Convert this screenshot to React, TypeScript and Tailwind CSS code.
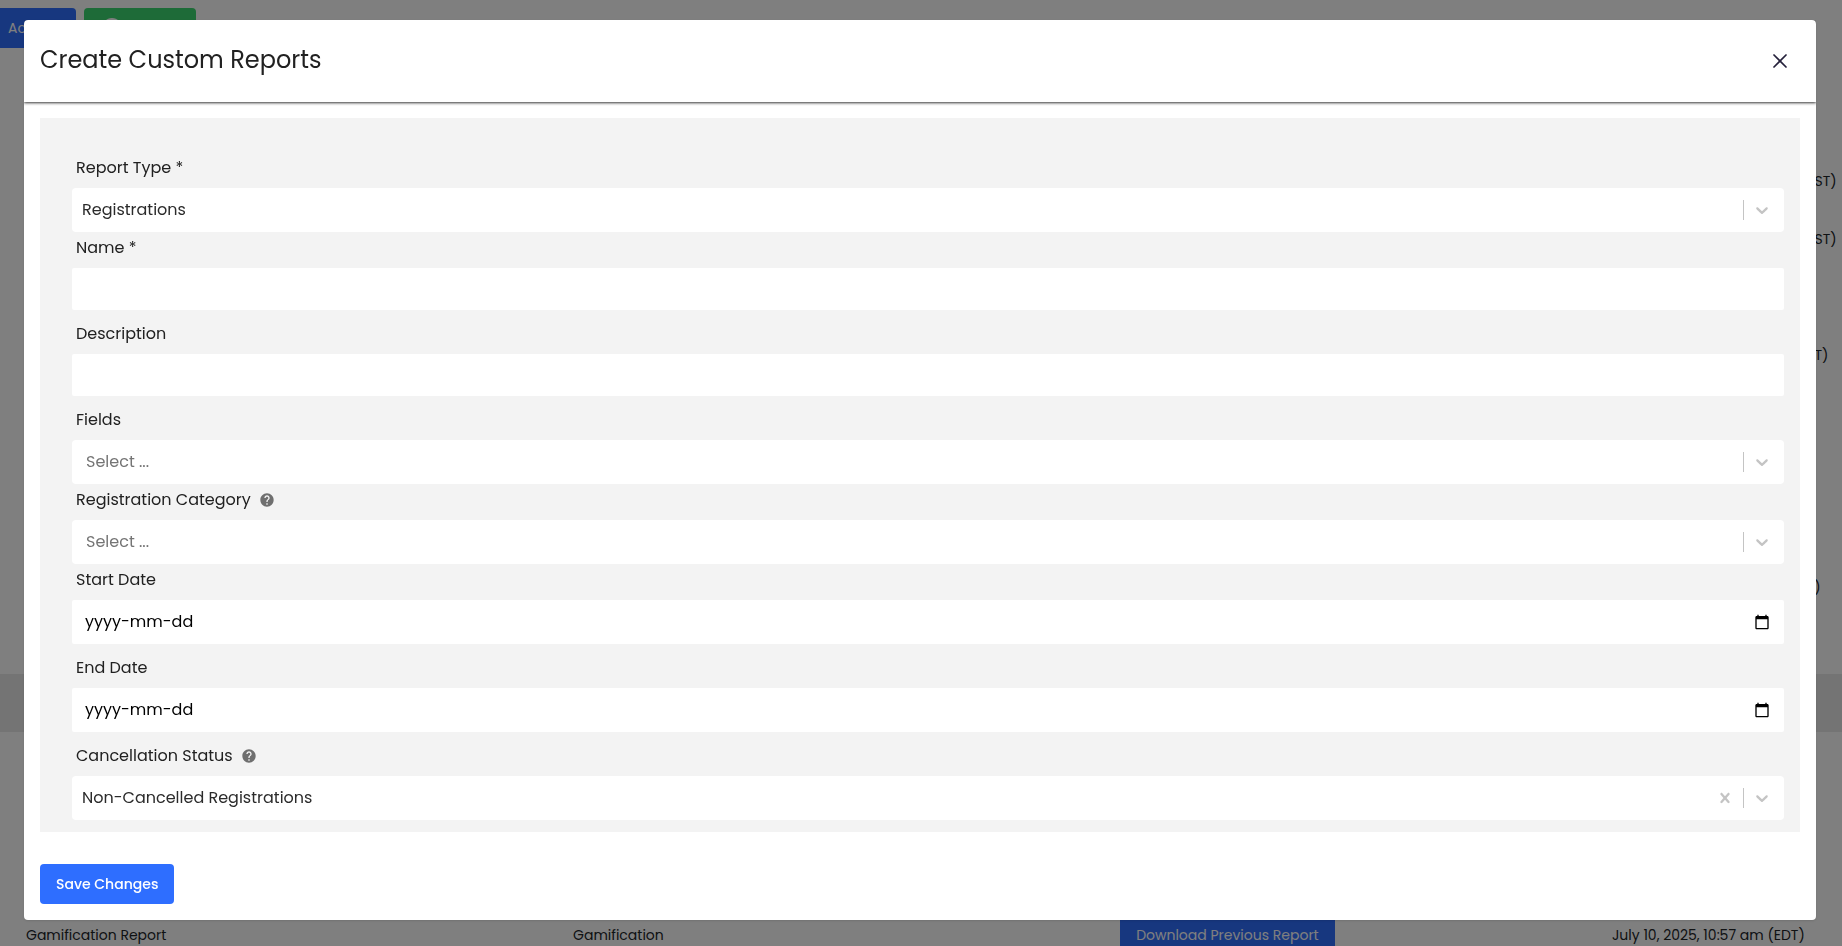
import { useState } from 'react';
import type { ReactNode } from 'react';
import { X } from 'lucide-react';
import { MdHelp, MdCheckCircle } from 'react-icons/md';

type ReportRow = {
  name?: string;
  type?: string;
  date?: string;
  selected?: boolean;
};

const rows: ReportRow[] = [
  { date: "February 20, 2025, 10:17 am (EST)" },
  { date: "February 20, 2025, 10:17 am (EST)" },
  {},
  { date: "October 7, 2025, 10:57 am (EDT)" },
  {},
  {},
  {},
  { date: "August 7, 2025, 10:57 am (EDT)" },
  {},
  { selected: true },
  {},
  {},
  {},
  { name: "Gamification Report", type: "Gamification", date: "July 10, 2025, 10:57 am (EDT)" }
];

function ReportsPage() {
  return (
    <div className="h-full overflow-hidden bg-white text-sm text-[#212529]">
      <div className="flex gap-2 pt-2 h-[152px] items-start">
        <button className="h-10 w-[76px] pl-2 pr-4 text-left rounded-r bg-[#2e6eff] text-white">Actions</button>
        <button className="h-10 w-28 pl-4 flex items-center rounded bg-[#3dd670] text-white" aria-label="Export">
          <MdCheckCircle size={24} />
        </button>
      </div>
      <table className="w-full table-fixed whitespace-nowrap">
        <colgroup>
          <col className="w-[29.7%]" />
          <col className="w-[29.7%]" />
          <col className="w-[26.7%]" />
          <col />
        </colgroup>
        <tbody>
          {rows.map((row, idx) => (
            <tr key={idx} className={row.selected ? "h-[58px] bg-[#e8e8e8]" : "h-[58px]"}>
              <td className="pl-[26px]">{row.name}</td>
              <td className="pl-[26px]">{row.type}</td>
              <td className="pl-[26px]">
                {row.name && (
                  <button className="h-10 px-4 bg-[#2e6eff] text-white">Download Previous Report</button>
                )}
              </td>
              <td className="pl-[26px]">{row.date}</td>
            </tr>
          ))}
        </tbody>
      </table>
    </div>
  );
}

function FieldLabel({ htmlFor, help, children }: { htmlFor: string; help?: boolean; children: ReactNode }) {
  return (
    <div className="flex items-center pt-1 pb-2 pl-1">
      <label htmlFor={htmlFor} className="leading-6">{children}</label>
      {help && <MdHelp size={16} className="ml-2 text-[#6f6f6f]" />}
    </div>
  );
}

type SelectFieldProps = {
  id: string;
  label: string;
  options: string[];
  placeholder?: string;
  help?: boolean;
  clearable?: boolean;
};

function SelectField({ id, label, options, placeholder, help, clearable }: SelectFieldProps) {
  const [value, setValue] = useState(placeholder ? "" : options[0]);

  return (
    <div>
      <FieldLabel htmlFor={id} help={help}>{label}</FieldLabel>
      <div className="grid h-11">
        <select
          id={id}
          value={value}
          onChange={(e) => setValue(e.target.value)}
          className={`col-start-1 row-start-1 w-full appearance-none rounded bg-white pr-24 pb-px ${value ? "pl-[10px] text-[#2b2b2b]" : "pl-[14px] text-[#757575]"}`}
        >
          <option value="">{placeholder}</option>
          {options.map((option) => (
            <option key={option} value={option}>{option}</option>
          ))}
        </select>
        <div className="col-start-1 row-start-1 z-10 flex items-center justify-self-end gap-2 pr-3 text-[#c4c4c4] pointer-events-none">
          {clearable && (
            <button type="button" aria-label="Clear" className="pointer-events-auto" onClick={() => setValue("")}>
              <svg width="20" height="20" viewBox="0 0 20 20" fill="currentColor">
                <path d="M14.348 14.849c-0.469 0.469-1.229 0.469-1.697 0l-2.651-3.030-2.651 3.029c-0.469 0.469-1.229 0.469-1.697 0-0.469-0.469-0.469-1.229 0-1.697l2.758-3.15-2.759-3.152c-0.469-0.469-0.469-1.228 0-1.697s1.228-0.469 1.697 0l2.652 3.031 2.651-3.031c0.469-0.469 1.228-0.469 1.697 0s0.469 1.229 0 1.697l-2.758 3.152 2.758 3.15c0.469 0.469 0.469 1.229 0 1.698z" />
              </svg>
            </button>
          )}
          <span className="h-5 w-px bg-[#c4c4c4]" />
          <svg width="20" height="20" viewBox="0 0 20 20" fill="currentColor">
            <path d="M4.516 7.548c0.436-0.446 1.043-0.481 1.576 0l3.908 3.747 3.908-3.747c0.533-0.481 1.141-0.446 1.574 0 0.436 0.445 0.408 1.197 0 1.615-0.406 0.418-4.695 4.502-4.695 4.502-0.217 0.223-0.502 0.335-0.787 0.335s-0.57-0.112-0.789-0.335c0 0-4.287-4.084-4.695-4.502s-0.436-1.17 0-1.615z" />
          </svg>
        </div>
      </div>
    </div>
  );
}

function TextField({ id, label }: { id: string; label: string }) {
  return (
    <div className="mb-2">
      <FieldLabel htmlFor={id}>{label}</FieldLabel>
      <input id={id} type="text" className="block h-[42px] w-full rounded-xs bg-white px-3" />
    </div>
  );
}

function DateField({ id, label }: { id: string; label: string }) {
  return (
    <div className="mb-2">
      <FieldLabel htmlFor={id}>{label}</FieldLabel>
      <div className="flex h-11 items-center rounded-xs bg-white pl-[13px] pr-[14px]">
        <input id={id} type="text" placeholder="yyyy-mm-dd" className="min-w-0 flex-1 text-black placeholder:text-black" />
        <button type="button" aria-label={`Pick ${label}`} className="text-black">
          <svg width="16" height="16" viewBox="0 0 24 24" fill="currentColor">
            <path d="M20 3h-1V1h-2v2H7V1H5v2H4c-1.1 0-2 .9-2 2v16c0 1.1.9 2 2 2h16c1.1 0 2-.9 2-2V5c0-1.1-.9-2-2-2zm0 18H4V8h16v13z" />
          </svg>
        </button>
      </div>
    </div>
  );
}

export default function App() {
  return (
    <div className="relative h-screen overflow-hidden font-[Poppins,Inter,sans-serif]">
      <ReportsPage />

      {/* Backdrop + dialog */}
      <div className="fixed inset-0 z-20 overflow-hidden bg-black/50 px-6 pt-5 pr-[26px]">
        <div role="dialog" aria-labelledby="dialog-title" className="rounded bg-white shadow-sm text-[#212121] text-base">
          <div className="flex h-[82px] items-center justify-between rounded-t px-4 pr-6 shadow-[0_1px_3px_rgba(0,0,0,0.8)] [clip-path:inset(0_0_-5px_0)]">
            <h1 id="dialog-title" className="pb-[2px] text-2xl">Create Custom Reports</h1>
            <button type="button" aria-label="Close" className="text-[#25213b]">
              <X size={24} strokeWidth={1.75} />
            </button>
          </div>

          <form className="p-4" onSubmit={(e) => e.preventDefault()}>
            <div className="bg-[#f3f3f3] pt-[34px] pr-4 pb-3 pl-8">
              <SelectField id="report-type" label="Report Type *" options={["Registrations"]} />
              <TextField id="name" label="Name *" />
              <TextField id="description" label="Description" />
              <SelectField id="fields" label="Fields" options={[]} placeholder="Select ..." />
              <SelectField id="category" label="Registration Category" options={[]} placeholder="Select ..." help />
              <DateField id="start-date" label="Start Date" />
              <DateField id="end-date" label="End Date" />
              <SelectField id="status" label="Cancellation Status" options={["Non-Cancelled Registrations"]} help clearable />
            </div>
            <button type="submit" className="mt-8 block h-10 rounded bg-[#2e6eff] px-4 text-sm font-medium text-white">
              Save Changes
            </button>
          </form>
        </div>
      </div>
    </div>
  );
}
